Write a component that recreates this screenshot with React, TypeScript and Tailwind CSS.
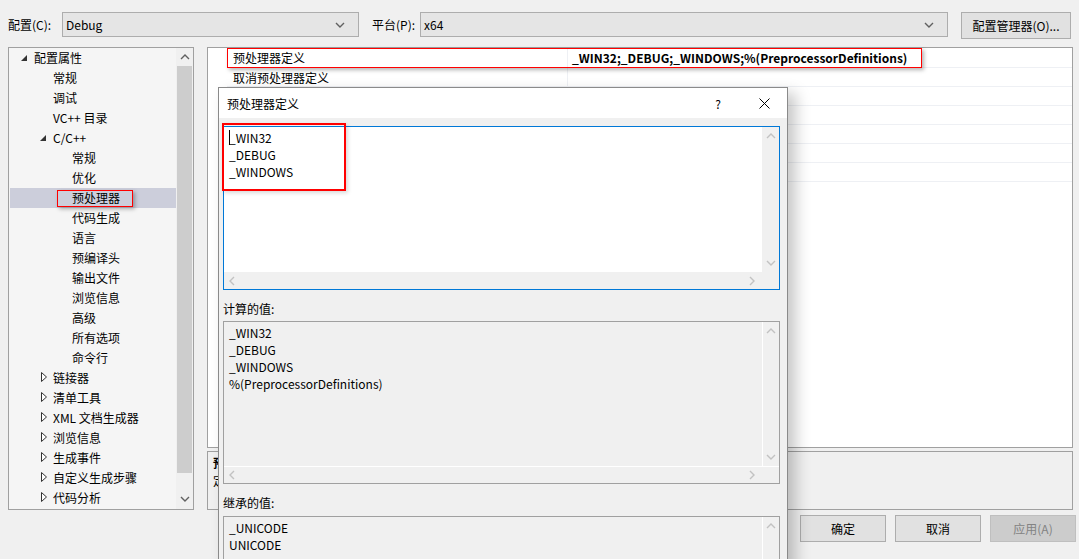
import React from "react";

type Item = { label: string; level: 0 | 1 | 2; arrow?: "open" | "closed"; selected?: boolean };

const tree: Item[] = [
  { label: "配置属性", level: 0, arrow: "open" },
  { label: "常规", level: 1 },
  { label: "调试", level: 1 },
  { label: "VC++ 目录", level: 1 },
  { label: "C/C++", level: 1, arrow: "open" },
  { label: "常规", level: 2 },
  { label: "优化", level: 2 },
  { label: "预处理器", level: 2, selected: true },
  { label: "代码生成", level: 2 },
  { label: "语言", level: 2 },
  { label: "预编译头", level: 2 },
  { label: "输出文件", level: 2 },
  { label: "浏览信息", level: 2 },
  { label: "高级", level: 2 },
  { label: "所有选项", level: 2 },
  { label: "命令行", level: 2 },
  { label: "链接器", level: 1, arrow: "closed" },
  { label: "清单工具", level: 1, arrow: "closed" },
  { label: "XML 文档生成器", level: 1, arrow: "closed" },
  { label: "浏览信息", level: 1, arrow: "closed" },
  { label: "生成事件", level: 1, arrow: "closed" },
  { label: "自定义生成步骤", level: 1, arrow: "closed" },
  { label: "代码分析", level: 1, arrow: "closed" },
];

const indent = { 0: "w-[10px]", 1: "w-[29px]", 2: "w-[48px]" };

// rows 3..7 sit under the dialog, so only the first two names show
const props = ["预处理器定义", "取消预处理器定义", "", "", "", "", ""];

function Chev({ dir, color = "#606060" }: { dir: "up" | "down" | "left" | "right"; color?: string }) {
  const vertical = dir === "up" || dir === "down";
  const pts =
    dir === "up" ? "1,5 5,1 9,5" : dir === "down" ? "1,1 5,5 9,1" : dir === "left" ? "5,1 1,5 5,9" : "1,1 5,5 1,9";
  return (
    <svg width={vertical ? 10 : 6} height={vertical ? 6 : 10} viewBox={vertical ? "0 0 10 6" : "0 0 6 10"}>
      <polyline points={pts} fill="none" stroke={color} strokeWidth="1.4" />
    </svg>
  );
}

function Combo({ value, width }: { value: string; width: string }) {
  return (
    <div className={`${width} h-[25px] bg-[#e5e5e5] border border-[#adadad] flex items-center justify-between pl-[3px] pr-[13px]`}>
      <span>{value}</span>
      <Chev dir="down" />
    </div>
  );
}

function Button({ children, disabled }: { children: React.ReactNode; disabled?: boolean }) {
  return (
    <div
      className={
        disabled
          ? "w-[86px] h-[27px] bg-[#cccccc] border border-[#bfbfbf] text-[#838383] flex items-center justify-center"
          : "w-[86px] h-[27px] bg-[#e1e1e1] border border-[#adadad] flex items-center justify-center"
      }
    >
      {children}
    </div>
  );
}

function Box({ lines, white, caret, height }: { lines: string[]; white?: boolean; caret?: boolean; height: string }) {
  return (
    <div
      className={`${height} flex flex-col shrink-0 border ${
        white ? "border-[#0078d7] bg-white" : "border-[#a0a0a0] bg-[#f0f0f0]"
      }`}
    >
      <div className="flex flex-1 min-h-0">
        <div className={`flex-1 pl-[5px] pt-[2px] leading-[17px] ${white ? "bg-white" : ""}`}>
          {lines.map((l, i) => (
            <div key={l} className="flex items-center">
              {caret && i === 0 && <span className="w-px h-[15px] bg-black -mr-px" />}
              <span>{l}</span>
            </div>
          ))}
        </div>
        <div
          className={`w-[17px] flex flex-col items-center justify-between py-[6px] bg-[#f0f0f0] ${
            white ? "" : "border-l border-white"
          }`}
        >
          <Chev dir="up" color="#c2c2c2" />
          <Chev dir="down" color="#c2c2c2" />
        </div>
      </div>
      <div className={`h-[17px] shrink-0 flex items-center justify-between pl-[5px] pr-[24px] bg-[#f0f0f0] ${white ? "" : "border-t border-white"}`}>
        <Chev dir="left" color="#c2c2c2" />
        <Chev dir="right" color="#c2c2c2" />
      </div>
    </div>
  );
}

export default function App() {
  return (
    <div className="relative w-[1079px] h-[559px] overflow-hidden bg-[#f0f0f0] text-[12px] text-black font-['Noto_Sans_CJK_SC',sans-serif] leading-[17px]">
      {/* top bar */}
      <div className="h-[39px] pt-[12px] pl-[8px] flex items-start">
        <div className="w-[54px] h-[25px] flex items-center">配置(C):</div>
        <Combo value="Debug" width="w-[297px]" />
        <div className="ml-[13px] w-[48px] h-[25px] flex items-center">平台(P):</div>
        <Combo value="x64" width="w-[528px]" />
        <div className="ml-[13px] w-[110px] h-[27px] bg-[#e1e1e1] border border-[#adadad] flex items-center justify-center">
          配置管理器(O)...
        </div>
      </div>

      {/* main */}
      <div className="h-[471px] pt-[8px] pl-[8px] flex gap-[13px]">
        <div className="w-[186px] h-[463px] border border-[#a0a0a0] bg-[#f5f5f5] flex">
          <div className="flex-1 -mt-px">
            {tree.map((it, i) => (
              <div key={i} className="relative h-[20px] flex items-center">
                {it.selected && (
                  <>
                    <div className="absolute top-px bottom-[-1px] left-px right-0 bg-[#cccedb]" />
                    <div className="absolute z-10 left-[48px] top-[3px] w-[76px] h-[17px] border border-[#ff0000] shadow-[2px_2px_4px_rgba(0,0,0,0.3)]" />
                  </>
                )}
                <div className={`${indent[it.level]} shrink-0`} />
                <div className="relative w-[15px] h-[20px] shrink-0 flex items-center">
                  {it.arrow === "open" && (
                    <svg width="6" height="6" viewBox="0 0 6 6" className="ml-[2px] mt-[1px]">
                      <polygon points="6,0 6,6 0,6" fill="#333" />
                    </svg>
                  )}
                  {it.arrow === "closed" && (
                    <svg width="6" height="10" viewBox="0 0 6 10" className="ml-[3px]">
                      <polygon points="0.5,0.5 5.5,5 0.5,9.5" fill="#fff" stroke="#333" strokeWidth="1" />
                    </svg>
                  )}
                </div>
                <span className="relative whitespace-nowrap">{it.label}</span>
              </div>
            ))}
          </div>
          <div className="w-[17px] bg-[#f0f0f0] flex flex-col items-center">
            <div className="h-[18px] flex items-center">
              <Chev dir="up" />
            </div>
            <div className="w-[15px] h-[407px] bg-[#cdcdcd]" />
            <div className="flex-1 flex items-end pb-[7px]">
              <Chev dir="down" />
            </div>
          </div>
        </div>

        <div className="w-[866px] flex flex-col gap-[3px]">
          <div className="h-[401px] border border-[#a0a0a0] bg-white pl-[19px]">
            {props.map((p, i) => (
              <div key={i} className={`relative flex border-b border-[#eef0f4] ${i === 0 ? "h-[20px]" : "h-[19px]"}`}>
                <div className="w-[341px] border-r border-[#eef0f4] pl-[6px] flex items-center whitespace-nowrap">{p}</div>
                <div className="flex-1 pl-[4px] flex items-center font-bold whitespace-nowrap">
                  {i === 0 ? "_WIN32;_DEBUG;_WINDOWS;%(PreprocessorDefinitions)" : ""}
                </div>
                {i === 0 && (
                  <div className="absolute z-10 left-0 top-0 w-[695px] h-[20px] border border-[#ff0000] shadow-[2px_2px_4px_rgba(0,0,0,0.3)]" />
                )}
              </div>
            ))}
          </div>
          <div className="h-[59px] border border-[#a0a0a0] bg-[#f0f0f0] pl-[5px] pt-[2px] leading-[18px]">
            <div className="font-bold">预处理器定义</div>
            <div>定义源文件的预处理符号。</div>
          </div>
        </div>
      </div>

      {/* buttons */}
      <div className="pt-[5px] pr-[3px] flex justify-end gap-[9px]">
        <Button>确定</Button>
        <Button>取消</Button>
        <Button disabled>应用(A)</Button>
      </div>

      {/* dialog */}
      <div className="absolute z-20 left-[218px] top-[87px] w-[570px] h-[490px] border border-[#8a8a8a] bg-[#f0f0f0] shadow-[8px_6px_14px_rgba(0,0,0,0.22)] flex flex-col">
        <div className="h-[30px] bg-white flex items-center pl-[8px] shrink-0">
          <span className="flex-1">预处理器定义</span>
          <span className="w-[20px] text-center">?</span>
          <div className="w-[46px] flex justify-center ml-[13px]">
            <svg width="11" height="11" viewBox="0 0 11 11">
              <path d="M0.5 0.5 L10.5 10.5 M10.5 0.5 L0.5 10.5" stroke="#000" strokeWidth="1" />
            </svg>
          </div>
        </div>
        <div className="flex-1 pl-[4px] pr-[7px] pt-[8px] flex flex-col">
          <div className="relative">
            <Box lines={["_WIN32", "_DEBUG", "_WINDOWS"]} white caret height="h-[164px]" />
            <div className="absolute z-10 -left-px -top-[3px] w-[124px] h-[68px] border-2 border-[#ff0000] shadow-[2px_2px_4px_rgba(0,0,0,0.15)]" />
          </div>
          <div className="h-[31px] pt-[10px] shrink-0">计算的值:</div>
          <Box lines={["_WIN32", "_DEBUG", "_WINDOWS", "%(PreprocessorDefinitions)"]} height="h-[163px]" />
          <div className="h-[32px] pt-[10px] shrink-0">继承的值:</div>
          <Box lines={["_UNICODE", "UNICODE"]} height="h-[120px]" />
        </div>
      </div>
    </div>
  );
}
